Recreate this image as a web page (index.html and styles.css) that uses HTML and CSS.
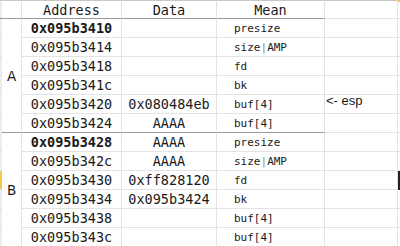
FILE: index.html
```html
<!DOCTYPE html>
<html>
<head>
<meta charset="utf-8">
<link rel="stylesheet" href="styles.css">
</head>
<body>
<div class="sheet">
  <div class="rh top"></div>
  <div class="cell lab top"></div>
  <div class="cell hd top">Address</div>
  <div class="cell hd top">Data</div>
  <div class="cell hd top">Mean</div>
  <div class="cell plain top"></div>
  <div class="cell last colsel top"></div>

  <div class="rh" style="grid-row:2"></div>
  <div class="rh" style="grid-row:3"></div>
  <div class="rh" style="grid-row:4"></div>
  <div class="rh" style="grid-row:5"></div>
  <div class="rh" style="grid-row:6"></div>
  <div class="rh" style="grid-row:7"></div>
  <div class="rh" style="grid-row:8"></div>
  <div class="rh" style="grid-row:9"></div>
  <div class="rh sel" style="grid-row:10"></div>
  <div class="rh" style="grid-row:11"></div>
  <div class="rh" style="grid-row:12"></div>
  <div class="rh" style="grid-row:13"></div>

  <div class="cell lab blk blkA">A</div>
  <div class="cell lab blk blkB">B</div>

  <div class="cell addr b">0x095b3410</div><div class="cell data"></div><div class="cell mean">presize</div><div class="cell plain"></div><div class="cell last"></div>
  <div class="cell addr">0x095b3414</div><div class="cell data"></div><div class="cell mean">size<span class="bar">|</span>AMP</div><div class="cell plain"></div><div class="cell last"></div>
  <div class="cell addr">0x095b3418</div><div class="cell data"></div><div class="cell mean">fd</div><div class="cell plain"></div><div class="cell last"></div>
  <div class="cell addr">0x095b341c</div><div class="cell data"></div><div class="cell mean">bk</div><div class="cell plain"></div><div class="cell last"></div>
  <div class="cell addr">0x095b3420</div><div class="cell data">0x080484eb</div><div class="cell mean">buf[4]</div><div class="cell plain note"><span class="esp">&lt;- esp</span></div><div class="cell last"></div>
  <div class="cell addr sep">0x095b3424</div><div class="cell data sep">AAAA</div><div class="cell mean sep">buf[4]</div><div class="cell plain"></div><div class="cell last"></div>

  <div class="cell addr b">0x095b3428</div><div class="cell data">AAAA</div><div class="cell mean">presize</div><div class="cell plain"></div><div class="cell last"></div>
  <div class="cell addr">0x095b342c</div><div class="cell data">AAAA</div><div class="cell mean">size<span class="bar">|</span>AMP</div><div class="cell plain"></div><div class="cell last"></div>
  <div class="cell addr">0x095b3430</div><div class="cell data">0xff828120</div><div class="cell mean">fd</div><div class="cell plain"></div><div class="cell last cur"></div>
  <div class="cell addr">0x095b3434</div><div class="cell data">0x095b3424</div><div class="cell mean">bk</div><div class="cell plain"></div><div class="cell last"></div>
  <div class="cell addr">0x095b3438</div><div class="cell data"></div><div class="cell mean">buf[4]</div><div class="cell plain"></div><div class="cell last"></div>
  <div class="cell addr sep">0x095b343c</div><div class="cell data sep"></div><div class="cell mean sep">buf[4]</div><div class="cell plain"></div><div class="cell last"></div>
</div>
</body>
</html>
```
FILE: styles.css
```css
html, body {
  margin: 0;
  padding: 0;
  background: #ffffff;
}
.sheet {
  display: grid;
  grid-template-columns: 2px 20px 100px 95px 108px 73px 1fr;
  grid-template-rows: repeat(13, 19px);
  width: 400px;
  height: 246px;
  overflow: hidden;
  font-family: "DejaVu Sans Mono", monospace;
  color: #1a1a1a;
}
.rh {
  grid-column: 1;
  background: #ececec;
  border-bottom: 1px solid #dcdcdc;
}
.rh.top {
  border-top: 1px solid #c8c8c8;
}
.rh.sel {
  background: #f2c94c;
}
.cell {
  box-sizing: border-box;
  border-right: 1px solid #e3e3e3;
  border-bottom: 1px solid #e3e3e3;
  display: flex;
  align-items: center;
  white-space: nowrap;
  overflow: visible;
  min-width: 0;
}
.top {
  border-top: 1px solid #c8c8c8;
  border-bottom: 1px solid #9a9a9a;
}
.cell.plain.top, .cell.last.top {
  border-bottom: 1px solid #e3e3e3;
}
.colsel {
  border-top: 2px solid #f2c94c;
}
.hd {
  justify-content: center;
  font-size: 13.5px;
}
.lab {
  grid-column: 2;
  border-right: 1px solid #e3e3e3;
}
.blk {
  font-family: "DejaVu Sans", sans-serif;
  font-size: 13.5px;
  padding-left: 5px;
  border-bottom: 1px solid #9a9a9a;
}
.blkA {
  grid-row: 2 / span 6;
}
.blkB {
  grid-row: 8 / span 6;
}
.addr {
  grid-column: 3;
  justify-content: center;
  font-size: 13.5px;
}
.addr.b {
  font-weight: bold;
}
.data {
  grid-column: 4;
  justify-content: center;
  font-size: 13.5px;
}
.mean {
  grid-column: 5;
  padding-left: 17px;
  font-size: 11px;
}
.bar {
  color: #6f8fb0;
}
.sep {
  border-bottom: 1px solid #9a9a9a;
}
.plain {
  grid-column: 6;
}
.last {
  grid-column: 7;
  border-right: none;
}
.note {
  align-items: flex-start;
}
.esp {
  font-family: "Liberation Sans", sans-serif;
  font-size: 13px;
  margin-top: -2px;
  padding-left: 1px;
}
.cur {
  border: 2px solid #222;
}
```
